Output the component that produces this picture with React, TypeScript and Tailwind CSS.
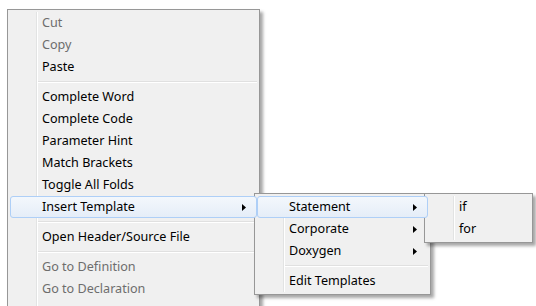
import { ReactNode } from "react";

type Entry =
  | { kind: "item"; label: string; disabled?: boolean; sub?: boolean; active?: boolean }
  | { kind: "sep" };

const item = (label: string, opts: { disabled?: boolean; sub?: boolean; active?: boolean } = {}): Entry => ({
  kind: "item",
  label,
  ...opts,
});
const sep: Entry = { kind: "sep" };

const mainItems: Entry[] = [
  item("Cut", { disabled: true }),
  item("Copy", { disabled: true }),
  item("Paste"),
  sep,
  item("Complete Word"),
  item("Complete Code"),
  item("Parameter Hint"),
  item("Match Brackets"),
  item("Toggle All Folds"),
  item("Insert Template", { sub: true, active: true }),
  sep,
  item("Open Header/Source File"),
  sep,
  item("Go to Definition", { disabled: true }),
  item("Go to Declaration", { disabled: true }),
];

const templateItems: Entry[] = [
  item("Statement", { sub: true, active: true }),
  item("Corporate", { sub: true }),
  item("Doxygen", { sub: true }),
  sep,
  item("Edit Templates"),
];

const statementItems: Entry[] = [item("if"), item("for")];

function Arrow() {
  return (
    <svg width="4" height="7" viewBox="0 0 4 7" className="block">
      <path d="M0 0 L4 3.5 L0 7 Z" fill="#000" />
    </svg>
  );
}

function MenuRow({ entry }: { entry: Entry }) {
  if (entry.kind === "sep") {
    return (
      <div className="h-[8px] flex items-center pl-[27px]">
        <div className="h-[2px] w-full border-t border-[#e0e0e0] border-b border-b-white" />
      </div>
    );
  }
  return (
    <div
      className={`relative z-10 h-[22px] flex items-center pl-[31px] pr-[10px] rounded-[3px] border ${
        entry.active
          ? "border-[#aecff7] bg-[linear-gradient(to_bottom,#f3f7fc,#e5edf8)]"
          : "border-transparent"
      }`}
    >
      <span
        className={`flex-1 whitespace-nowrap leading-none ${
          entry.disabled ? "text-[#6d6d6d]" : "text-black"
        }`}
      >
        {entry.label}
      </span>
      {entry.sub && <Arrow />}
    </div>
  );
}

function Menu({
  entries,
  className,
  children,
}: {
  entries: Entry[];
  className: string;
  children?: ReactNode;
}) {
  return (
    <div
      className={`absolute bg-[#f0f0f0] border border-[#979797] p-[2px] shadow-[3px_3px_3px_rgba(0,0,0,0.35)] ${className}`}
    >
      <div className="absolute top-[2px] bottom-[2px] left-[28px] w-[2px] border-l border-[#e2e3e3] border-r border-r-white" />
      <div className="flex flex-col">
        {entries.map((e, i) => (
          <MenuRow key={i} entry={e} />
        ))}
      </div>
      {children}
    </div>
  );
}

export default function App() {
  return (
    <div
      className="relative w-[536px] h-[306px] overflow-hidden bg-white text-[12.6px]"
      style={{ fontFamily: '"Noto Sans", "Open Sans", sans-serif' }}
    >
      <Menu entries={mainItems} className="left-[7px] top-[9px] w-[253px] pb-[24px]" />
      <Menu entries={templateItems} className="left-[254px] top-[193px] w-[177px]" />
      <Menu entries={statementItems} className="left-[424px] top-[193px] w-[109px]" />
    </div>
  );
}
